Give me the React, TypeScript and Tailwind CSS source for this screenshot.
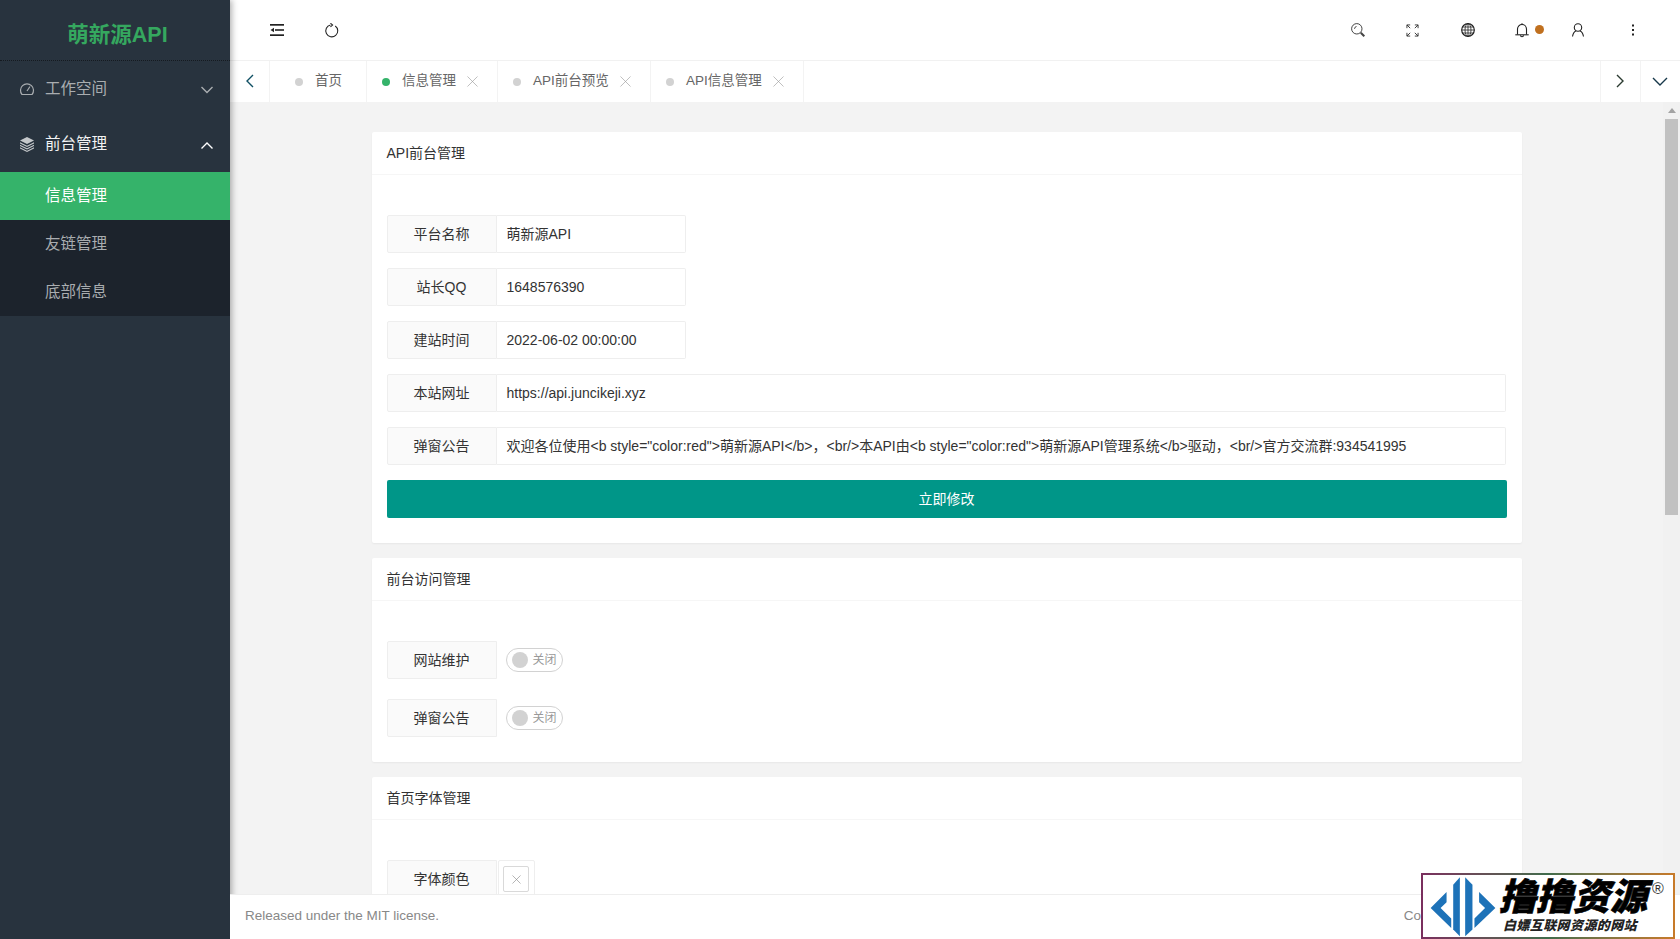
import { X } from "lucide-react";

const tabs = [
  { label: "信息管理", active: true, width: "w-[131px]" },
  { label: "API前台预览", active: false, width: "w-[153px]" },
  { label: "API信息管理", active: false, width: "w-[153px]" },
];

const fields = [
  { label: "平台名称", value: "萌新源API", wide: false },
  { label: "站长QQ", value: "1648576390", wide: false },
  { label: "建站时间", value: "2022-06-02 00:00:00", wide: false },
  { label: "本站网址", value: "https://api.juncikeji.xyz", wide: true },
  {
    label: "弹窗公告",
    value:
      '欢迎各位使用<b style="color:red">萌新源API</b>，<br/>本API由<b style="color:red">萌新源API管理系统</b>驱动，<br/>官方交流群:934541995',
    wide: true,
  },
];

function Chevron({ d, className }: { d: string; className?: string }) {
  return (
    <svg viewBox="0 0 16 16" fill="none" stroke="currentColor" strokeWidth="1.4" className={className}>
      <polyline points={d} />
    </svg>
  );
}

function FieldLabel({ children }: { children: string }) {
  return (
    <div className="flex h-[38px] w-[110px] shrink-0 items-center justify-center rounded-l-[2px] border border-[#eeeeee] bg-[#fafafa] text-[#333333]">
      {children}
    </div>
  );
}

function Field({ label, value, wide }: { label: string; value: string; wide: boolean }) {
  return (
    <div className="mb-[15px] flex h-[38px]">
      <FieldLabel>{label}</FieldLabel>
      <div
        className={`flex h-[38px] items-center rounded-r-[2px] border border-l-0 border-[#eeeeee] pl-[10px] text-[#333333] ${
          wide ? "mr-px flex-1" : "w-[189px]"
        }`}
      >
        {value}
      </div>
    </div>
  );
}

function SwitchRow({ label }: { label: string }) {
  return (
    <div className="mb-[20px] flex h-[38px] items-center">
      <FieldLabel>{label}</FieldLabel>
      <div className="ml-[9px] flex h-[24px] w-[57px] items-center rounded-full border border-[#d2d2d2] pl-[5px]">
        <span className="h-[16px] w-[16px] rounded-full bg-[#d2d2d2]" />
        <span className="ml-[5px] text-[12px] text-[#999999]">关闭</span>
      </div>
    </div>
  );
}

function Card({ title, bodyClass, children }: { title: string; bodyClass: string; children: React.ReactNode }) {
  return (
    <section className="mb-[15px] rounded-[2px] bg-white shadow-[0_1px_2px_rgba(0,0,0,0.05)]">
      <div className="flex h-[43px] items-center border-b border-[#f6f6f6] px-[15px] pt-px text-[#333333]">{title}</div>
      <div className={bodyClass}>{children}</div>
    </section>
  );
}

function Sidebar() {
  return (
    <aside className="relative z-10 w-[230px] shrink-0 bg-[#28333e] text-[15.5px] shadow-[2px_0_6px_rgba(0,0,0,0.3)]">
      <div className="flex h-[61px] items-center justify-center border-b border-dotted border-[#151a20] pl-[5px] pt-[10px] text-[21.5px] font-bold text-[#35a85f]">
        萌新源API
      </div>
      <div className="flex h-[55px] items-center pl-[19px] pr-[15px] text-[#a9adb0]">
        <svg viewBox="0 0 16 16" fill="none" stroke="currentColor" strokeWidth="1.2" className="h-[16px] w-[16px]">
          <path d="M3 13.5a6.5 6.5 0 1 1 10 0z" />
          <path d="M8 10l3-4.5" />
        </svg>
        <span className="ml-[10px] flex-1">工作空间</span>
        <Chevron d="2.500,5 8,10.500 13.500,5" className="mt-[2px] h-[16px] w-[16px]" />
      </div>
      <div className="flex h-[56px] items-center pl-[19px] pr-[15px] text-[#f2f3f4]">
        <svg viewBox="0 0 16 16" fill="currentColor" className="h-[16px] w-[16px] text-[#c4c7ca]">
          <path d="M8 1l7 3.5L8 8 1 4.500z" />
          <path d="M1 6.300l7 3.400 7-3.400v1.200l-7 3.400-7-3.400z" />
          <path d="M1 8.800l7 3.400 7-3.400V10l-7 3.400L1 10z" />
          <path d="M1 11.300l7 3.400 7-3.400v1.200L8 16l-7-3.500z" />
        </svg>
        <span className="ml-[10px] flex-1">前台管理</span>
        <Chevron d="2.500,10.500 8,5 13.500,10.500" className="mt-[4px] h-[16px] w-[16px] text-white" />
      </div>
      <div className="bg-[#1c232c] text-[#a9adb0]">
        <div className="flex h-[48px] items-center bg-[#35b36a] pl-[45px] text-white">信息管理</div>
        <div className="flex h-[48px] items-center pl-[45px]">友链管理</div>
        <div className="flex h-[48px] items-center pl-[45px]">底部信息</div>
      </div>
    </aside>
  );
}

function Header() {
  const iconCell = "flex h-[60px] w-[55px] items-center justify-center";
  return (
    <header className="flex h-[61px] shrink-0 items-center justify-between border-b border-[#f1f1f1] bg-white pl-[19px] pr-[20px] text-[#222222]">
      <div className="flex">
        <div className={iconCell}>
          <svg viewBox="0 0 14 14" fill="currentColor" className="h-[14px] w-[14px]">
            <rect x="0" y="1" width="14" height="1.700" />
            <rect x="5" y="6.200" width="9" height="1.600" />
            <rect x="0" y="11.300" width="14" height="1.700" />
            <path d="M0.500 7L4 4.800v4.400z" />
          </svg>
        </div>
        <div className={iconCell}>
          <svg viewBox="0 0 14 14" fill="none" stroke="currentColor" strokeWidth="1" className="h-[15px] w-[15px]">
            <path d="M6 1.900A5.600 5.600 0 1 0 10.500 2.800" />
            <path d="M6 .2L8 1.900 6 3.600" />
          </svg>
        </div>
      </div>
      <div className="flex">
        <div className={iconCell}>
          <svg viewBox="0 0 14 14" fill="none" stroke="currentColor" strokeWidth="1" className="h-[14px] w-[14px] text-[#444444]">
            <circle cx="5.800" cy="5.800" r="5.200" />
            <path d="M3.500 5.800A2.500 2.500 0 0 1 5.500 3.500" />
            <path d="M9.800 9.800l3.500 3.500" strokeWidth="2" />
          </svg>
        </div>
        <div className={iconCell}>
          <svg viewBox="0 0 14 14" fill="none" stroke="currentColor" strokeWidth="1" className="h-[13px] w-[13px] text-[#333333]">
            <path d="M1 4.500V1h3.500M1 1l3.500 3.500M13 4.500V1H9.500M13 1L9.500 4.500M1 9.500V13h3.500M1 13l3.500-3.500M13 9.500V13H9.500M13 13L9.500 9.500" />
          </svg>
        </div>
        <div className={iconCell}>
          <svg viewBox="0 0 14 14" fill="none" stroke="currentColor" strokeWidth="0.800" className="h-[14px] w-[14px]">
            <circle cx="7" cy="7" r="6.300" strokeWidth="1.200" />
            <ellipse cx="7" cy="7" rx="3" ry="6.300" />
            <path d="M7 .7v12.600M.7 7h12.600M1.500 4h11M1.500 10h11" />
          </svg>
        </div>
        <div className={`${iconCell} relative pr-px`}>
          <svg viewBox="0 0 14 15" fill="none" stroke="currentColor" strokeWidth="1.100" className="h-[15px] w-[14px]">
            <path d="M2.500 11.500V6a4.500 4.500 0 0 1 9 0v5.500" />
            <path d="M.3 11.800h13.400" />
            <path d="M5.500 12.200a1.500 1.500 0 0 0 3 0" />
            <path d="M7 .2v1.300" />
          </svg>
          <span className="absolute left-[40px] top-[25px] h-[9px] w-[9px] rounded-full bg-[#c0701f]" />
        </div>
        <div className={iconCell}>
          <svg viewBox="0 0 14 14" fill="none" stroke="currentColor" strokeWidth="1.100" className="h-[14px] w-[14px]">
            <circle cx="7" cy="4.500" r="3.700" />
            <path d="M1.500 13.500C2 10.500 3.500 8.500 5 8M12.500 13.500C12 10.500 10.500 8.500 9 8" />
          </svg>
        </div>
        <div className={iconCell}>
          <svg viewBox="0 0 4 14" fill="currentColor" className="h-[14px] w-[4px]">
            <rect x="1" y="1.500" width="2" height="2" />
            <rect x="1" y="6" width="2" height="2" />
            <rect x="1" y="10.500" width="2" height="2" />
          </svg>
        </div>
      </div>
    </header>
  );
}

function TabBar() {
  return (
    <nav className="flex h-[41px] shrink-0 bg-white text-[13.5px] text-[#666666]">
      <div className="flex w-[40px] items-center justify-center border-r border-[#f3f3f3] pb-[2px] text-[#0f4f63]">
        <Chevron d="11,2 5,8 11,14" className="h-[16px] w-[16px]" />
      </div>
      <div className="flex w-[97px] items-center justify-center border-r border-[#f3f3f3] pl-px">
        <span className="h-[8px] w-[8px] rounded-full bg-[#d2d2d2]" />
        <span className="ml-[12px]">首页</span>
      </div>
      {tabs.map((tab) => (
        <div key={tab.label} className={`flex items-center border-r border-[#f3f3f3] pl-[15px] ${tab.width}`}>
          <span className={`h-[8px] w-[8px] rounded-full ${tab.active ? "bg-[#35b36a]" : "bg-[#d2d2d2]"}`} />
          <span className="ml-[12px]">{tab.label}</span>
          <X size={19} strokeWidth={0.8} className="ml-[7px] text-[#999999]" />
        </div>
      ))}
      <div className="flex-1" />
      <div className="flex w-[40px] items-center justify-center border-l border-[#f3f3f3] pb-[2px] pr-[2px] text-[#2a3a30]">
        <Chevron d="5,2 11,8 5,14" className="h-[16px] w-[16px]" />
      </div>
      <div className="flex w-[40px] items-center justify-center border-l border-[#f3f3f3] pb-[2px] pr-px text-[#17384a]">
        <Chevron d="1,5 8,12 15,5" className="h-[16px] w-[16px]" />
      </div>
    </nav>
  );
}

function Watermark() {
  return (
    <div className="absolute bottom-0 right-[5px] z-20 h-[66px] w-[254px] bg-linear-to-r from-[#7a2e5e] via-[#3f6b4b] to-[#c87a28] p-[2px]">
      <div className="flex h-full items-center bg-white pl-px">
        <svg viewBox="0 0 235 201" fill="#1d72b8" className="h-[67px] w-[78px] shrink-0">
          <polygon points="20,105 68,57 68,88 50,105 82,137 82,165" />
          <polygon points="88,35 108,12 108,190 88,170" />
          <polygon points="124,12 146,35 146,170 124,190" />
          <polygon points="215,105 166,57 166,88 184,105 152,137 152,165" />
        </svg>
        <div className="ml-[-3px] flex flex-col items-start">
          <div className="flex items-start">
            <span className="text-[37px] font-black italic leading-[38px] text-black [-webkit-text-stroke:0.6px_black]">撸撸资源</span>
            <span className="ml-[5px] text-[16px] leading-[20px] text-[#333333]">®</span>
          </div>
          <span className="mt-[2px] pl-[4px] text-[13px] font-black italic leading-[14px] tracking-[0.4px] text-[#222222]">
            白嫖互联网资源的网站
          </span>
        </div>
      </div>
    </div>
  );
}

export default function App() {
  return (
    <div className="relative flex h-screen overflow-hidden bg-[#f3f3f3] font-['Liberation_Sans','Noto_Sans_CJK_SC',sans-serif] text-[14px]">
      <Sidebar />
      <main className="flex min-w-0 flex-1 flex-col">
        <Header />
        <TabBar />
        <div className="flex min-h-0 flex-1">
          <div className="min-w-0 flex-1 overflow-hidden pt-[30px]">
            <div className="mx-auto w-[1150px]">
              <Card title="API前台管理" bodyClass="px-[15px] pb-[25px] pt-[40px]">
                {fields.map((field) => (
                  <Field key={field.label} {...field} />
                ))}
                <div className="flex h-[38px] items-center justify-center rounded-[2px] bg-[#009688] pt-px text-white">立即修改</div>
              </Card>
              <Card title="前台访问管理" bodyClass="px-[15px] pb-[5px] pt-[40px]">
                <SwitchRow label="网站维护" />
                <SwitchRow label="弹窗公告" />
              </Card>
              <Card title="首页字体管理" bodyClass="px-[15px] pb-[25px] pt-[40px]">
                <div className="flex h-[38px]">
                  <FieldLabel>字体颜色</FieldLabel>
                  <div className="ml-px flex h-[38px] w-[37px] items-center justify-center rounded-[2px] border border-[#eeeeee]">
                    <div className="flex h-[26px] w-[26px] items-center justify-center rounded-[2px] border border-[#d9d9d9]">
                      <X size={15} strokeWidth={1} className="text-[#888888]" />
                    </div>
                  </div>
                </div>
              </Card>
            </div>
          </div>
          <div className="flex w-[17px] shrink-0 flex-col items-center bg-[#f1f1f1] pt-[6px]">
            <svg viewBox="0 0 8 5" fill="#a3a3a3" className="h-[5px] w-[8px]">
              <polygon points="4,0 8,5 0,5" />
            </svg>
            <div className="mt-[6px] h-[396px] w-[13px] bg-[#c1c1c1]" />
          </div>
        </div>
        <footer className="relative z-10 flex h-[45px] shrink-0 items-center justify-between border-t border-[#eeeeee] bg-white pb-[2px] pl-[15px] pr-[171px] text-[13.5px] text-[#888888]">
          <span>Released under the MIT license.</span>
          <span>Copyright © 2022</span>
        </footer>
      </main>
      <Watermark />
    </div>
  );
}
